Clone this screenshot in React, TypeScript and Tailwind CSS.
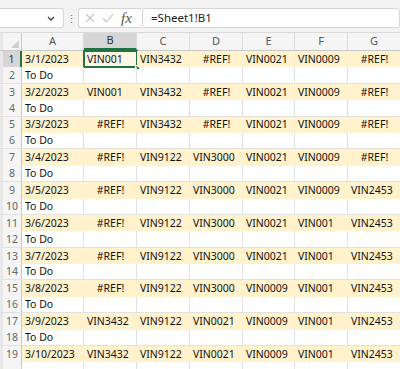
import React from 'react';

type Row = string[];

const rows: Row[] = [
    ['3/1/2023', 'VIN001', 'VIN3432', '#REF!', 'VIN0021', 'VIN0009', '#REF!'],
    ['To Do'],
    ['3/2/2023', 'VIN001', 'VIN3432', '#REF!', 'VIN0021', 'VIN0009', '#REF!'],
    ['To Do'],
    ['3/3/2023', '#REF!', 'VIN3432', '#REF!', 'VIN0021', 'VIN0009', '#REF!'],
    ['To Do'],
    ['3/4/2023', '#REF!', 'VIN9122', 'VIN3000', 'VIN0021', 'VIN0009', '#REF!'],
    ['To Do'],
    ['3/5/2023', '#REF!', 'VIN9122', 'VIN3000', 'VIN0021', 'VIN0009', 'VIN2453'],
    ['To Do'],
    ['3/6/2023', '#REF!', 'VIN9122', 'VIN3000', 'VIN0021', 'VIN001', 'VIN2453'],
    ['To Do'],
    ['3/7/2023', '#REF!', 'VIN9122', 'VIN3000', 'VIN0021', 'VIN001', 'VIN2453'],
    ['To Do'],
    ['3/8/2023', '#REF!', 'VIN9122', 'VIN3000', 'VIN0009', 'VIN001', 'VIN2453'],
    ['To Do'],
    ['3/9/2023', 'VIN3432', 'VIN9122', 'VIN0021', 'VIN0009', 'VIN001', 'VIN2453'],
    ['To Do'],
    ['3/10/2023', 'VIN3432', 'VIN9122', 'VIN0021', 'VIN0009', 'VIN001', 'VIN2453'],
    [],
];

const columns = ['A', 'B', 'C', 'D', 'E', 'F', 'G'];
const colWidths = ['w-[62px]', 'w-[53px]', 'w-[53px]', 'w-[53px]', 'w-[52px]', 'w-[53px]', 'w-[53px]'];

function Toolbar() {
    return (
        <div className="flex h-[33px] shrink-0 items-start border-b border-[#dadada] bg-[#f3f3f3] pt-[8px]">
            <div className="flex h-[20px] w-[64px] items-center justify-end rounded-r-[3px] border border-l-0 border-[#d6d6d6] bg-white pr-[8px]">
                <svg width="8" height="5" viewBox="0 0 8 5" fill="none">
                    <path d="M1 1l3 3 3-3" stroke="#444" strokeWidth="1.3" />
                </svg>
            </div>
            <div className="flex h-[20px] w-[14px] items-center justify-center text-[11px] leading-none text-[#777]">⋮</div>
            <div className="flex h-[20px] w-[64px] items-center gap-[7px] rounded-l-[3px] border border-r-0 border-[#d6d6d6] bg-white pl-[6px]">
                <svg width="10" height="10" viewBox="0 0 10 10">
                    <path d="M1 1l8 8M9 1l-8 8" stroke="#c4c4c4" strokeWidth="1.1" />
                </svg>
                <svg width="12" height="10" viewBox="0 0 12 10">
                    <path d="M1 5.5l3.5 3.5L11 1" stroke="#c4c4c4" strokeWidth="1.1" fill="none" />
                </svg>
                <span className="font-['Liberation_Serif',serif] text-[15px] italic leading-none text-[#555]">fx</span>
            </div>
            <div className="flex h-[20px] flex-1 items-center rounded-[3px] border border-[#d6d6d6] bg-white pl-[8px] text-[11.5px] text-[#222]">
                =Sheet1!B1
            </div>
        </div>
    );
}

function HeaderRow() {
    return (
        <div className="flex h-[18px] shrink-0 border-b border-[#c8c8c8] bg-[#f5f5f5]">
            <div className="relative w-[22px] shrink-0 border-l-[3px] border-r border-l-[#e8e8e8] border-r-[#c8c8c8]">
                <div className="absolute bottom-[2px] right-[2px] h-0 w-0 border-b-[8px] border-l-[8px] border-b-[#cfcfcf] border-l-transparent" />
            </div>
            {columns.map((c, i) => (
                <div
                    key={c}
                    className={`${colWidths[i]} flex shrink-0 items-center justify-center border-r border-[#dcdcdc] text-[11px] ${
                        c === 'B' ? 'border-b-2 border-b-[#217346] bg-[#d6d6d6] text-[#333]' : 'text-[#555]'
                    }`}
                >
                    {c}
                </div>
            ))}
        </div>
    );
}

function Cell({ value, width, filled, selected }: { value?: string; width: string; filled: boolean; selected: boolean }) {
    const isError = value?.startsWith('#');
    return (
        <div
            className={`${width} relative flex shrink-0 items-center whitespace-nowrap pt-[1px] ${
                isError ? 'justify-center' : 'justify-start px-[3px]'
            } ${selected ? 'bg-[#fff8e4]' : filled ? 'bg-[#fff2cc]' : 'border-r border-[#e1e1e1]'}`}
        >
            {value}
            {selected ? (
                <>
                    <div className="absolute inset-[-1px] border-2 border-[#217346]" />
                    <div className="absolute bottom-[-3px] right-[-3px] h-[5px] w-[5px] border border-white bg-[#217346]" />
                </>
            ) : null}
        </div>
    );
}

function DataRow({ row, index }: { row: Row; index: number }) {
    const filled = row.length > 1;
    const isFirst = index === 0;
    const isLast = index === rows.length - 1;
    return (
        <div className={`flex h-[16.4px] shrink-0 ${filled ? '' : 'border-b border-[#e1e1e1]'}`}>
            <div
                className={`flex w-[22px] shrink-0 items-center justify-center border-l-[3px] border-l-[#e8e8e8] pt-[1px] text-[10.5px] ${
                    isFirst ? 'border-r-2 border-r-[#217346] bg-[#d6d6d6] text-[#333]' : 'border-r border-r-[#c8c8c8] bg-[#f5f5f5] text-[#666]'
                }`}
            >
                {isLast ? '' : index + 1}
            </div>
            {columns.map((c, i) => (
                <Cell key={c} value={row[i]} width={colWidths[i]} filled={filled} selected={isFirst && i === 1} />
            ))}
        </div>
    );
}

export default function App() {
    return (
        <div className="flex h-[369px] w-[400px] flex-col overflow-hidden bg-white font-['Noto_Sans',sans-serif] text-[10.5px] text-[#111]">
            <Toolbar />
            <HeaderRow />
            {rows.map((row, i) => (
                <DataRow key={i} row={row} index={i} />
            ))}
        </div>
    );
}
